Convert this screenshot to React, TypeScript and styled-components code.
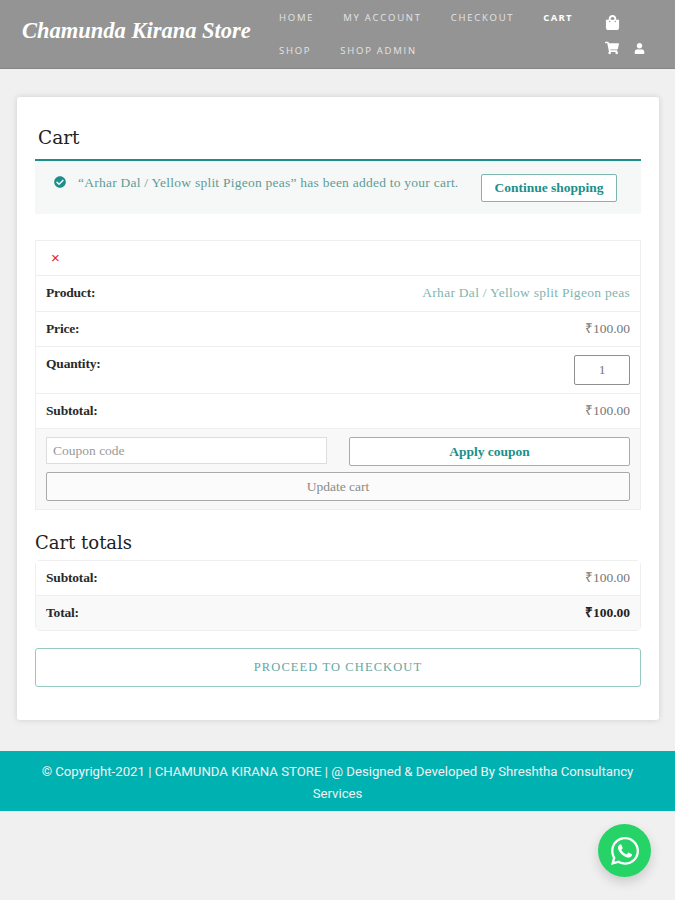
import styled, { createGlobalStyle } from 'styled-components';
import {
  FaCheckCircle,
  FaShoppingBag,
  FaShoppingCart,
  FaUser,
  FaWhatsapp,
} from 'react-icons/fa';

const GlobalStyle = createGlobalStyle`
  html, body {
    margin: 0;
    padding: 0;
    background: #f0f0f0;
  }
  * {
    box-sizing: border-box;
  }
`;

const SERIF = `'Liberation Serif', serif`;
const TEAL = '#1a8f8c';

const Page = styled.div`
  position: relative;
  width: 675px;
  height: 900px;
  overflow: hidden;
  background: #f0f0f0;
  font-family: ${SERIF};
`;

const Header = styled.header`
  display: flex;
  height: 69px;
  padding-left: 22px;
  background: #949494;
  border-bottom: 1px solid #868686;
`;

const Logo = styled.a`
  width: 257px;
  padding-top: 18px;
  color: #fff;
  font-family: 'Liberation Serif', serif;
  font-size: 22.5px;
  font-style: italic;
  font-weight: 700;
  white-space: nowrap;
`;

const NavLinks = styled.nav`
  display: flex;
  flex-wrap: wrap;
  align-content: flex-start;
  column-gap: 29px;
  width: 326px;
`;

const NavLink = styled.a<{ $active?: boolean }>`
  height: 33px;
  padding-top: 11px;
  color: ${(p) => (p.$active ? '#fff' : '#e4e4e4')};
  font-family: 'Open Sans', sans-serif;
  font-size: 9.5px;
  font-weight: ${(p) => (p.$active ? 700 : 400)};
  letter-spacing: ${(p) => (p.$active ? '1.3px' : '1.75px')};
  line-height: 14px;
  white-space: nowrap;
`;

const NavIcons = styled.div`
  width: 60px;
  padding-top: 9px;
  color: #fff;
`;

const IconRow = styled.div`
  display: flex;
  align-items: center;
  gap: 15px;
  height: 26px;
`;

const Main = styled.main`
  padding: 28px 16px 31px 17px;
`;

const Card = styled.section`
  height: 623px;
  padding: 0 18px;
  background: #fff;
  border-radius: 3px;
  box-shadow: 0 0 6px rgba(0, 0, 0, 0.14);
`;

const Title = styled.h1`
  margin: 0;
  height: 62px;
  padding: 28px 0 0 3px;
  color: #222;
  font-family: 'DejaVu Serif', serif;
  font-size: 18.5px;
  font-weight: 400;
  line-height: 26px;
`;

const Notice = styled.div`
  display: flex;
  justify-content: space-between;
  height: 55px;
  padding: 13px 24px 0 19px;
  background: #f6f7f7;
  border-top: 2px solid ${TEAL};
`;

const NoticeText = styled.p`
  display: flex;
  gap: 12px;
  margin: 0;
  color: #5d9d98;
  font-size: 13.5px;
  line-height: 17px;
  letter-spacing: 0.24px;

  svg {
    margin-top: 2px;
    color: ${TEAL};
  }
`;

const ContinueButton = styled.a`
  width: 136px;
  height: 28px;
  background: #fff;
  border: 1px solid #7db5b1;
  border-radius: 2px;
  color: ${TEAL};
  font-size: 13.5px;
  font-weight: 700;
  line-height: 26px;
  text-align: center;
`;

const Table = styled.div<{ $rounded?: boolean }>`
  margin-top: ${(p) => (p.$rounded ? 0 : '26px')};
  border: 1px solid #eeeeee;
  border-radius: ${(p) => (p.$rounded ? '5px' : 0)};
`;

const Row = styled.div<{ $height?: number; $shaded?: boolean }>`
  display: flex;
  justify-content: space-between;
  height: ${(p) => p.$height ?? 35}px;
  padding: 9px 10px 0;
  background: ${(p) => (p.$shaded ? '#f9f9f9' : '#fff')};
  color: #777;
  font-size: 13.5px;
  line-height: 16px;

  & + & {
    border-top: 1px solid #eeeeee;
  }
`;

const Label = styled.span`
  color: #2a2a2a;
  font-weight: 700;
  letter-spacing: -0.18px;
`;

const ProductLink = styled.a`
  color: #7fb5b0;
  letter-spacing: 0.28px;
`;

const Strong = styled.span`
  color: #222;
  font-weight: 700;
`;

const RemoveMark = styled.span`
  padding-left: 5px;
  color: #e8202a;
  font-family: 'Liberation Sans', sans-serif;
  font-size: 15px;
`;

const QuantityBox = styled.div`
  width: 56px;
  height: 30px;
  margin-top: -1px;
  border: 1px solid #8f8f8f;
  border-radius: 2px;
  color: #777;
  line-height: 28px;
  text-align: center;
`;

const Actions = styled.div`
  display: grid;
  grid-template-columns: 281px 281px;
  justify-content: space-between;
  align-content: start;
  row-gap: 6px;
  height: 81px;
  padding: 8px 10px 0;
  background: #f8f8f8;
  border-top: 1px solid #eeeeee;
`;

const CouponField = styled.div`
  height: 27px;
  padding-left: 6px;
  background: #fff;
  border: 1px solid #dddddd;
  color: #9a9a9a;
  font-size: 13.5px;
  line-height: 25px;
`;

const ApplyButton = styled.a`
  height: 29px;
  background: #fff;
  border: 1px solid #7fc0b6;
  border-radius: 2px;
  color: ${TEAL};
  font-size: 13.5px;
  font-weight: 700;
  line-height: 27px;
  text-align: center;
`;

const UpdateButton = styled.a`
  grid-column: 1 / -1;
  height: 29px;
  background: #fbfbfb;
  border: 1px solid #a9a9a9;
  border-radius: 2px;
  color: #8a8a8a;
  font-size: 13.5px;
  line-height: 27px;
  text-align: center;
`;

const Subtitle = styled.h2`
  margin: 0;
  height: 50px;
  padding-top: 20px;
  color: #222;
  font-family: 'DejaVu Serif', serif;
  font-size: 18px;
  font-weight: 400;
  line-height: 25px;
`;

const CheckoutButton = styled.a`
  display: block;
  height: 39px;
  margin-top: 17px;
  border: 1px solid #98c9c0;
  border-radius: 3px;
  color: #62a8a4;
  font-size: 12.5px;
  letter-spacing: 1.1px;
  line-height: 37px;
  text-align: center;
`;

const Footer = styled.footer`
  height: 60px;
  padding: 10px 38px 0;
  background: #00b1b1;
  color: #f2f2f2;
  font-family: Roboto, sans-serif;
  font-size: 13.2px;
  line-height: 22px;
  text-align: center;
`;

const WhatsApp = styled.a`
  position: absolute;
  left: 598px;
  top: 824px;
  display: flex;
  align-items: center;
  justify-content: center;
  width: 53px;
  height: 53px;
  background: #25d366;
  border-radius: 50%;
  box-shadow: 0 5px 12px rgba(0, 0, 0, 0.16);
  color: #fff;
`;

export default function App() {
  return (
    <Page>
      <GlobalStyle />
      <Header>
        <Logo>Chamunda Kirana Store</Logo>
        <NavLinks>
          <NavLink>HOME</NavLink>
          <NavLink>MY ACCOUNT</NavLink>
          <NavLink>CHECKOUT</NavLink>
          <NavLink $active>CART</NavLink>
          <NavLink>SHOP</NavLink>
          <NavLink>SHOP ADMIN</NavLink>
        </NavLinks>
        <NavIcons>
          <IconRow>
            <FaShoppingBag size={15} />
          </IconRow>
          <IconRow>
            <FaShoppingCart size={14} />
            <FaUser size={11} />
          </IconRow>
        </NavIcons>
      </Header>
      <Main>
        <Card>
          <Title>Cart</Title>
          <Notice>
            <NoticeText>
              <FaCheckCircle size={12} />
              “Arhar Dal / Yellow split Pigeon peas” has been added to your cart.
            </NoticeText>
            <ContinueButton>Continue shopping</ContinueButton>
          </Notice>
          <Table>
            <Row $height={34}>
              <RemoveMark>×</RemoveMark>
            </Row>
            <Row $height={36}>
              <Label>Product:</Label>
              <ProductLink>Arhar Dal / Yellow split Pigeon peas</ProductLink>
            </Row>
            <Row>
              <Label>Price:</Label>
              <span>₹100.00</span>
            </Row>
            <Row $height={47}>
              <Label>Quantity:</Label>
              <QuantityBox>1</QuantityBox>
            </Row>
            <Row>
              <Label>Subtotal:</Label>
              <span>₹100.00</span>
            </Row>
            <Actions>
              <CouponField>Coupon code</CouponField>
              <ApplyButton>Apply coupon</ApplyButton>
              <UpdateButton>Update cart</UpdateButton>
            </Actions>
          </Table>
          <Subtitle>Cart totals</Subtitle>
          <Table $rounded>
            <Row $height={34}>
              <Label>Subtotal:</Label>
              <span>₹100.00</span>
            </Row>
            <Row $shaded>
              <Label>Total:</Label>
              <Strong>₹100.00</Strong>
            </Row>
          </Table>
          <CheckoutButton>PROCEED TO CHECKOUT</CheckoutButton>
        </Card>
      </Main>
      <Footer>
        © Copyright-2021 | CHAMUNDA KIRANA STORE | @ Designed &amp; Developed By
        Shreshtha Consultancy Services
      </Footer>
      <WhatsApp>
        <FaWhatsapp size={32} />
      </WhatsApp>
    </Page>
  );
}
